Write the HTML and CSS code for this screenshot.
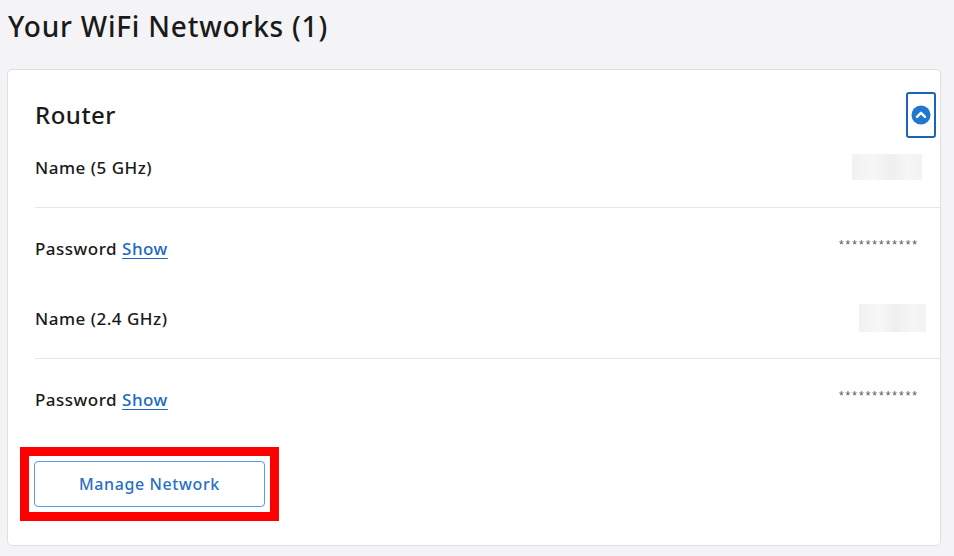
FILE: index.html
```html
<!DOCTYPE html>
<html lang="en">
  <head>
    <meta charset="UTF-8" />
    <meta name="viewport" content="width=device-width, initial-scale=1.0" />
    <title>Your WiFi Networks</title>
    <link rel="stylesheet" href="styles.css">
  </head>
  <body>
    <h1 class="page-title">Your WiFi Networks (1)</h1>

    <div class="card">
      <div class="card-head">
        <h2 class="card-title">Router</h2>
        <button class="toggle" aria-label="Collapse">
          <svg width="20" height="20" viewBox="0 0 20 20">
            <circle cx="10" cy="10" r="9.5" fill="#1f77d0" />
            <path d="M6 11.8 L10 7.8 L14 11.8" fill="none" stroke="#fff" stroke-width="2.4" stroke-linecap="round" stroke-linejoin="round" />
          </svg>
        </button>
      </div>

      <div class="group">
        <div class="field">
          <span class="label">Name (5 GHz)</span>
          <span class="blur blur-a"></span>
        </div>
        <div class="divider"></div>
        <div class="field">
          <span class="label">Password <a href="#" class="show">Show</a></span>
          <span class="dots">************</span>
        </div>
      </div>

      <div class="group">
        <div class="field">
          <span class="label">Name (2.4 GHz)</span>
          <span class="blur blur-b"></span>
        </div>
        <div class="divider"></div>
        <div class="field">
          <span class="label">Password <a href="#" class="show">Show</a></span>
          <span class="dots">************</span>
        </div>
      </div>

      <div class="highlight">
        <button class="btn-manage">Manage Network</button>
      </div>
    </div>
  </body>
</html>
```

FILE: styles.css
```css
body {
  margin: 0;
  background: #f4f4f6;
  font-family: "Noto Sans", "Open Sans", sans-serif;
  color: #1a1a1a;
}

.page-title {
  margin: 0;
  padding: 8px 0 0 8px;
  height: 69px;
  box-sizing: border-box;
  font-size: 28px;
  font-weight: 500;
  line-height: 36px;
  letter-spacing: 0.8px;
}

.card {
  margin: 0 13px 0 7px;
  background: #fff;
  border: 1px solid #dfe0e6;
  border-radius: 5px;
  padding: 22px 0 24px 27px;
}

.card-head {
  display: flex;
  justify-content: space-between;
  align-items: center;
  padding-right: 4px;
}

.card-title {
  margin: 0 0 2px;
  font-size: 24px;
  font-weight: 500;
  letter-spacing: 0.5px;
}

.toggle {
  width: 30px;
  height: 46px;
  padding: 0;
  border: 2px solid #1a63b8;
  border-radius: 3px;
  background: #fff;
  display: flex;
  align-items: center;
  justify-content: center;
}

.toggle svg {
  display: block;
}

.group + .group {
  margin-top: 12px;
}

.field {
  height: 58px;
  display: flex;
  align-items: center;
  justify-content: space-between;
  padding-right: 18px;
}

.label {
  font-size: 17px;
  font-weight: 500;
  letter-spacing: 0.5px;
}

.show {
  color: #1b6ac0;
  text-decoration: underline;
  text-underline-offset: 3px;
}

.divider {
  height: 1px;
  background: #e6e6ec;
  margin: 11px 0;
}

.blur {
  display: block;
  background: linear-gradient(90deg, #f1f1f2, #f7f7f7 30%, #efefef 55%, #f6f6f6 80%, #f2f2f3);
}

.blur-a {
  width: 70px;
  height: 26px;
}

.blur-b {
  width: 67px;
  height: 28px;
  margin-right: -4px;
}

.dots {
  font-family: "Liberation Sans", sans-serif;
  font-size: 12px;
  letter-spacing: 2px;
  color: #555;
  margin-right: 3px;
  margin-top: -6px;
}

.highlight {
  display: inline-block;
  margin: 19px 0 0 -15px;
  border: 9px solid #ff0000;
  padding: 5px;
  background: #fff;
}

.btn-manage {
  display: block;
  width: 231px;
  height: 46px;
  background: #fff;
  border: 1px solid #5b9be0;
  border-radius: 4px;
  font-family: inherit;
  font-size: 16px;
  font-weight: 500;
  letter-spacing: 0.6px;
  color: #2a70c2;
}
```
